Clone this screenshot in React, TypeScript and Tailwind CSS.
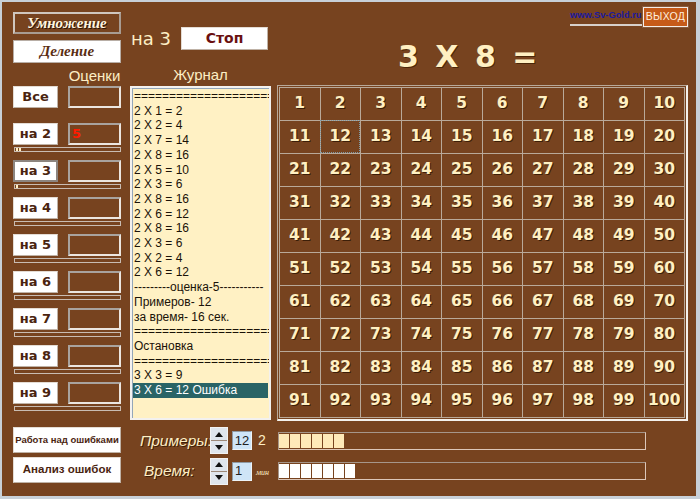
import React from "react"

const JOURNAL = [
  "=======================",
  "2 X 1 = 2",
  "2 X 2 = 4",
  "2 X 7 = 14",
  "2 X 8 = 16",
  "2 X 5 = 10",
  "2 X 3 = 6",
  "2 X 8 = 16",
  "2 X 6 = 12",
  "2 X 8 = 16",
  "2 X 3 = 6",
  "2 X 2 = 4",
  "2 X 6 = 12",
  "---------оценка-5-----------",
  "Примеров- 12",
  "за время- 16 сек.",
  "=======================",
  "Остановка",
  "=======================",
  "3 X 3 = 9",
]

const ROWS = [
  { label: "на 2", grade: "5", dots: 2, active: false },
  { label: "на 3", grade: "", dots: 1, active: true },
  { label: "на 4", grade: "", dots: 0, active: false },
  { label: "на 5", grade: "", dots: 0, active: false },
  { label: "на 6", grade: "", dots: 0, active: false },
  { label: "на 7", grade: "", dots: 0, active: false },
  { label: "на 8", grade: "", dots: 0, active: false },
  { label: "на 9", grade: "", dots: 0, active: false },
]

const whiteBtn =
  "bg-white border border-[#e4dcd4] border-b-[#bfb2a6] border-r-[#bfb2a6] flex items-center justify-center"
const gradeBox =
  "w-[53px] h-[22px] border-2 border-t-[#a9a39e] border-l-[#a9a39e] border-b-[#ece6e0] border-r-[#ece6e0] flex items-center pl-[2px]"

function Spinner() {
  return (
    <div className="w-[18px] h-[27px] flex flex-col gap-[1px] bg-[#9c8878] border border-[#f2f2f2]">
      <div className="flex-1 bg-[#dfe5ec] flex items-center justify-center">
        <svg width="8" height="5" viewBox="0 0 8 5"><path d="M0 5 L4 0 L8 5 Z" fill="#111" /></svg>
      </div>
      <div className="flex-1 bg-[#dfe5ec] flex items-center justify-center">
        <svg width="8" height="5" viewBox="0 0 8 5"><path d="M0 0 L4 5 L8 0 Z" fill="#111" /></svg>
      </div>
    </div>
  )
}

function Bar({ cells, color }: { cells: number; color: string }) {
  return (
    <div className="w-[368px] h-[18px] border border-[#a6968a] border-b-[#dcc6b8] border-r-[#dcc6b8] flex gap-[1px] p-[1px] pl-0">
      {Array.from({ length: cells }).map((_, i) => (
        <div key={i} className={`w-[10px] h-full ${color}`} />
      ))}
    </div>
  )
}

export default function App() {
  return (
    <div className="w-[700px] h-[499px] box-border bg-[#77431f] border-[#c8d0d8] border-t-2 border-l-2 border-r-4 border-b-[3px] flex flex-col overflow-hidden font-['Liberation_Sans',sans-serif]">
      {/* header */}
      <div className="h-[82px] flex shrink-0">
        <div className="ml-[11px] w-[108px] pt-[10px] flex flex-col">
          <div className="h-[22px] border-2 border-[#cfc6be] border-b-[#a89c92] border-r-[#a89c92] flex items-center justify-center font-['Liberation_Serif',serif] italic font-bold text-[15px] text-[#fff6e0] [text-shadow:1px_1px_0_#2e1606]">
            Умножение
          </div>
          <div className="mt-[6px] h-[23px] bg-white border border-[#b8aea6] flex items-center justify-center font-['Liberation_Serif',serif] italic font-bold text-[15px] text-[#5a2e12]">
            Деление
          </div>
          <div className="mt-[4px] ml-[55px] w-[53px] text-center text-[15px] leading-[17px] text-[#fdeec4]">Оценки</div>
        </div>
        <div className="ml-[9px] w-[141px] flex flex-col">
          <div className="mt-[25px] h-[23px] flex items-center">
            <span className="ml-[1px] font-['DejaVu_Sans',sans-serif] text-[18px] leading-[20px] text-[#fdeec4]">на 3</span>
            <div className={`ml-[10px] w-[87px] h-[23px] ${whiteBtn} font-['DejaVu_Sans',sans-serif] font-bold text-[14px] text-[#6a1010]`}>
              Стоп
            </div>
          </div>
          <div className="mt-[16px] text-center text-[15px] leading-[17px] text-[#fdeec4]">Журнал</div>
        </div>
        <div className="ml-[6px] w-[411px] flex flex-col">
          <div className="mt-[5px] flex justify-end items-start">
            <div className="w-[73px] h-[19px] border-b-2 border-[#d8d0ca] text-[9.3px] font-bold leading-[11px] pt-[3px] text-[#1c1a9e] whitespace-nowrap">
              www.Sv-Gold.ru
            </div>
            <div className="w-[45px] h-[20px] bg-[#c65a18] border border-[#f4ece6] outline-1 outline-[#8a5a3a] flex items-center justify-center text-[10.5px] text-[#ffeedd] tracking-[0.3px]">
              ВЫХОД
            </div>
          </div>
          <div className="mt-[13px] ml-[121px] font-['DejaVu_Sans',sans-serif] font-bold text-[30px] leading-[34px] text-[#fff0c2] whitespace-pre [word-spacing:6px] [text-shadow:1px_1px_0_#4a2608]">
            3 X 8 =
          </div>
        </div>
      </div>

      {/* main */}
      <div className="h-[337px] flex shrink-0">
        <div className="ml-[11px] w-[108px] pt-[2px] flex flex-col">
          <div className="flex justify-between h-[22px]">
            <div className={`w-[45px] h-[22px] ${whiteBtn} font-['DejaVu_Sans',sans-serif] font-bold text-[13px] text-[#4a2410]`}>Все</div>
            <div className={gradeBox} />
          </div>
          <div className="mt-[15px] flex flex-col gap-[8px]">
            {ROWS.map((r) => (
              <div key={r.label} className="flex flex-col">
                <div className="flex justify-between h-[22px]">
                  <div
                    className={`w-[45px] h-[22px] flex items-center justify-center bg-white font-['DejaVu_Sans',sans-serif] font-bold text-[13px] text-[#4a2410] ${
                      r.active ? "border-2 border-[#8c8580]" : "border border-[#e4dcd4] border-b-[#bfb2a6] border-r-[#bfb2a6]"
                    }`}
                  >
                    {r.label}
                  </div>
                  <div className={gradeBox}>
                    <span className="font-['DejaVu_Sans',sans-serif] font-bold text-[13px] text-[#ff1a00]">{r.grade}</span>
                  </div>
                </div>
                <div className="mt-[2px] ml-[1px] h-[5px] border border-[#c9bcb2] flex gap-[1px] pl-[1px] items-center">
                  {Array.from({ length: r.dots }).map((_, i) => (
                    <div key={i} className="w-[2px] h-[3px] bg-[#ffeec0]" />
                  ))}
                </div>
              </div>
            ))}
          </div>
        </div>

        <div className="ml-[9px] mt-[2px] w-[141px] h-[334px] bg-[#fff1c4] border-2 border-[#f3f1ee] shadow-[inset_1px_1px_0_#93a6b8] overflow-hidden pt-[1px] pl-[1px] text-[12px] leading-[14.7px] text-[#1a1208] whitespace-nowrap">
          {JOURNAL.map((l, i) => (
            <div key={i} className="px-[1px] overflow-hidden">{l}</div>
          ))}
          <div className="px-[1px] mr-[1px] bg-[#2a6466] text-white">3 X 6 = 12 Ошибка</div>
        </div>

        <div className="ml-[6px] mt-[1px] w-[411px] h-[336px] border-t border-l border-[#b9a999] border-b-2 border-r-2 border-b-[#f4f1ec] border-r-[#f4f1ec] p-[1px]">
          <div className="grid grid-cols-10 border-r border-b border-[#b9a999]">
            {Array.from({ length: 100 }, (_, i) => i + 1).map((n) => (
              <div
                key={n}
                className={`h-[33px] border-l border-t border-[#b9a999] flex items-center justify-center font-['DejaVu_Sans',sans-serif] font-bold text-[15.5px] text-[#fff0c2] [text-shadow:1px_1px_0_#3c1e08] ${
                  n === 12 ? "outline-1 outline-dotted outline-[#7f9aa6] outline-offset-[-1px]" : ""
                }`}
              >
                {n}
              </div>
            ))}
          </div>
        </div>
      </div>

      {/* bottom */}
      <div className="flex">
        <div className="ml-[11px] w-[108px] pt-[6px] flex flex-col gap-[4px]">
          <div className={`h-[26px] ${whiteBtn} font-bold text-[9.5px] text-[#4a2410] whitespace-nowrap`}>Работа над ошибками</div>
          <div className={`h-[26px] ${whiteBtn} font-bold text-[11.5px] text-[#4a2410]`}>Анализ ошибок</div>
        </div>
        <div className="ml-[19px] pt-[6px] flex flex-col gap-[4px]">
          <div className="h-[27px] flex items-center">
            <div className="w-[70px] italic text-[15.5px] text-[#fdeec4] [text-shadow:1px_1px_0_#3c1e08]">Примеры:</div>
            <Spinner />
            <div className="ml-[4px] w-[20px] h-[19px] bg-[#cfe5f7] border border-[#8f9aa4] border-b-[#eef4f8] border-r-[#eef4f8] flex items-center justify-center text-[13px] text-[#202020]">12</div>
            <div className="ml-[6px] w-[20px] text-[14px] text-[#fdeec4]">2</div>
            <Bar cells={6} color="bg-[#fee9b8]" />
          </div>
          <div className="h-[26px] flex items-center">
            <div className="w-[70px] pl-[4px] italic text-[15.5px] text-[#fdeec4] [text-shadow:1px_1px_0_#3c1e08]">Время:</div>
            <Spinner />
            <div className="ml-[4px] w-[20px] h-[19px] bg-[#cfe5f7] border border-[#8f9aa4] border-b-[#eef4f8] border-r-[#eef4f8] flex items-center pl-[2px] text-[13px] text-[#202020]">1</div>
            <div className="ml-[4px] w-[22px] pt-[3px] font-['Liberation_Serif',serif] italic text-[8px] text-[#fdeec4]">мин</div>
            <Bar cells={7} color="bg-white" />
          </div>
        </div>
      </div>
    </div>
  )
}
